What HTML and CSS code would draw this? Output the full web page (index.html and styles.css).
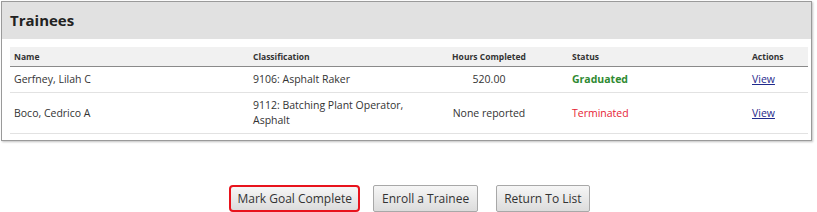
FILE: index.html
```html
<!DOCTYPE html>
<html lang="en">
<head>
  <meta charset="UTF-8">
  <title>Trainees</title>
  <link rel="stylesheet" href="styles.css">
</head>
<body>

<div class="panel">
  <div class="panel-head">Trainees</div>
  <div class="panel-body">
    <table class="grid">
      <colgroup>
        <col class="c-name">
        <col class="c-class">
        <col class="c-hours">
        <col class="c-status">
        <col class="c-actions">
      </colgroup>
      <thead>
        <tr>
          <th>Name</th>
          <th>Classification</th>
          <th class="center">Hours Completed</th>
          <th>Status</th>
          <th>Actions</th>
        </tr>
      </thead>
      <tbody>
        <tr>
          <td>Gerfney, Lilah C</td>
          <td>9106: Asphalt Raker</td>
          <td class="center">520.00</td>
          <td class="graduated">Graduated</td>
          <td><a href="#">View</a></td>
        </tr>
        <tr>
          <td>Boco, Cedrico A</td>
          <td>9112: Batching Plant Operator, Asphalt</td>
          <td class="center">None reported</td>
          <td class="terminated">Terminated</td>
          <td><a href="#">View</a></td>
        </tr>
      </tbody>
    </table>
  </div>
</div>

<div class="buttons">
  <button class="btn btn-focus">Mark Goal Complete</button>
  <button class="btn">Enroll a Trainee</button>
  <button class="btn btn-last">Return To List</button>
</div>

</body>
</html>
```

FILE: styles.css
```css
body {
  margin: 0;
  font-family: "Open Sans", Arial, sans-serif;
  color: #333;
  background-color: #fff;
}
.panel {
  width: 811px;
  margin: 1px 0 0 1px;
  border: 1px solid #9a9a9a;
  box-sizing: border-box;
  box-shadow: 1px 1px 2px rgba(0, 0, 0, 0.25);
}
.panel-head {
  height: 37px;
  line-height: 37px;
  background-color: #e1e1e1;
  padding-left: 8px;
  font-size: 15px;
  font-weight: bold;
  color: #222;
}
.panel-body {
  padding: 8px 3px 6px 8px;
}
.grid {
  width: 798px;
  table-layout: fixed;
  border-collapse: collapse;
  font-size: 10.5px;
}
.c-name { width: 239px; }
.c-class { width: 161px; }
.c-hours { width: 158px; }
.c-status { width: 180px; }
.c-actions { width: 60px; }
.grid th {
  background-color: #f1f1f1;
  font-size: 8.5px;
  font-weight: bold;
  text-align: left;
  padding: 3px 4px 3px;
  height: 13px;
  border-bottom: 1px solid #8a8a8a;
}
.grid td {
  padding: 5px 4px 5px;
  line-height: 15px;
  border-bottom: 1px solid #e2e2e2;
  vertical-align: middle;
}
.grid .center {
  text-align: center;
}
.graduated {
  color: #2f8a32;
  font-weight: bold;
}
.terminated {
  color: #e62334;
}
.grid a {
  color: #1f2a8c;
}
.buttons {
  display: flex;
  justify-content: center;
  gap: 13px;
  margin-top: 44px;
  padding-left: 2px;
}
.btn {
  font-family: "Open Sans", Arial, sans-serif;
  font-size: 12px;
  color: #333;
  height: 27px;
  padding: 0 8px;
  border: 1px solid #a8a8a8;
  border-radius: 2px;
  background: linear-gradient(#f6f6f6, #dcdcdc);
}
.btn-focus {
  border: 2px solid #e8131c;
  border-radius: 4px;
  padding: 0 6px;
}
.btn-last {
  margin-left: 5px;
  padding: 0 7px;
}
```
